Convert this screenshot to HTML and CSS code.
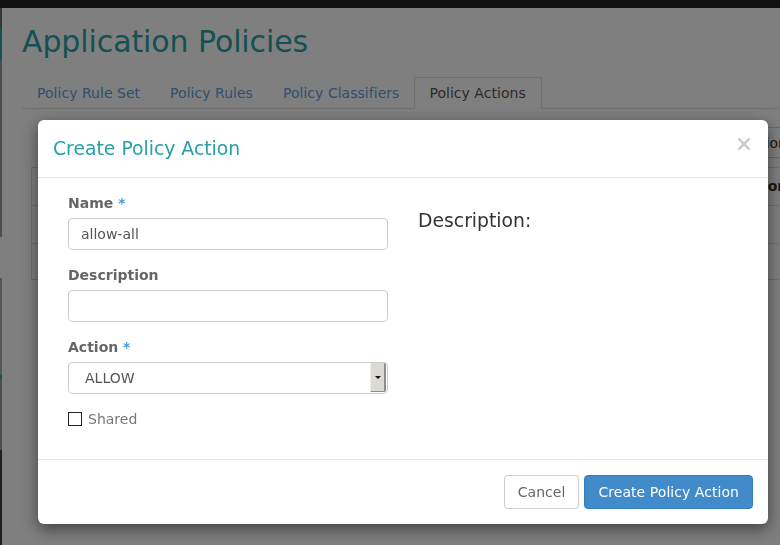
FILE: index.html
```html
<!DOCTYPE html>
<html>
<head>
<meta charset="utf-8">
<title>Application Policies</title>
<link rel="stylesheet" href="styles.css">
</head>
<body>
<div class="page">
  <div class="topbar"></div>
  <div class="main">
    <div class="edge">
      <span class="seg seg-a"></span>
      <span class="seg seg-b"></span>
      <span class="seg seg-c"></span>
      <span class="seg seg-d"></span>
      <span class="seg seg-e"></span>
      <span class="seg seg-b2"></span>
      <span class="seg seg-e2"></span>
      <span class="seg seg-f"></span>
    </div>
    <div class="content">
      <h1 class="page-title">Application Policies</h1>
      <ul class="tabs">
        <li class="tab">Policy Rule Set</li>
        <li class="tab">Policy Rules</li>
        <li class="tab">Policy Classifiers</li>
        <li class="tab active">Policy Actions</li>
      </ul>
      <div class="toolbar">
        <button class="tool-btn">Create Policy Action</button>
      </div>
      <div class="table">
        <div class="cell head"></div>
        <div class="cell head">Action</div>
        <div class="cell"></div>
        <div class="cell"></div>
        <div class="cell last"></div>
        <div class="cell last"></div>
      </div>
    </div>
  </div>
</div>

<div class="backdrop"></div>

<div class="modal">
  <div class="modal-header">
    <h3 class="modal-title">Create Policy Action</h3>
    <svg class="close" width="14" height="14" viewBox="0 0 14 14">
      <path d="M1.5 1.5 L12.5 12.5 M12.5 1.5 L1.5 12.5" stroke="#c6c6c6" stroke-width="2.2" fill="none"/>
    </svg>
  </div>
  <div class="modal-body">
    <div class="col">
      <div class="form-group">
        <label class="label">Name <span class="req">*</span></label>
        <div class="input">allow-all</div>
      </div>
      <div class="form-group">
        <label class="label">Description</label>
        <div class="input"></div>
      </div>
      <div class="form-group">
        <label class="label">Action <span class="req">*</span></label>
        <div class="select">
          <span class="select-text">ALLOW</span>
          <span class="select-arrow"><span class="tri"></span></span>
        </div>
      </div>
      <div class="form-group check-row">
        <span class="checkbox"></span>
        <span class="check-label">Shared</span>
      </div>
    </div>
    <div class="col">
      <h3 class="help-title">Description:</h3>
    </div>
  </div>
  <div class="modal-footer">
    <button class="btn btn-default">Cancel</button>
    <button class="btn btn-primary">Create Policy Action</button>
  </div>
</div>
</body>
</html>
```

FILE: styles.css
```css
html, body {
  margin: 0;
  padding: 0;
}
body {
  width: 780px;
  height: 545px;
  overflow: hidden;
  background: #fff;
  font-family: "DejaVu Sans", "Noto Sans", sans-serif;
  position: relative;
}

.page {
  height: 545px;
  display: flex;
  flex-direction: column;
}
.topbar {
  height: 8px;
  background: #222;
  flex: none;
}
.main {
  display: flex;
  flex: 1;
}
.edge {
  width: 2px;
  flex: none;
  display: flex;
  flex-direction: column;
}
.seg { display: block; flex: none; }
.seg-a { height: 20px; background: #707070; }
.seg-b { height: 32px; background: #2aa4a4; }
.seg-c { height: 177px; background: #999; }
.seg-d { height: 41px; background: #fff; }
.seg-e { height: 97px; background: #aaa; }
.seg-b2 { height: 4px; background: #2aa4a4; }
.seg-e2 { height: 71px; background: #9a9a9a; }
.seg-f { flex: 1; background: #463a50; }

.content {
  flex: none;
  width: 778px;
  padding-left: 20px;
}
.page-title {
  margin: 17px 0 0;
  font-size: 30px;
  line-height: 33px;
  font-weight: normal;
  letter-spacing: -0.1px;
  color: #2aa2a6;
}
.tabs {
  margin: 19px 0 0;
  padding: 0;
  list-style: none;
  display: flex;
  border-bottom: 1px solid #ddd;
}
.tab {
  font-size: 14px;
  line-height: 20px;
  padding: 5px 14px;
  border: 1px solid transparent;
  margin-bottom: -1px;
  letter-spacing: 0.03px;
  color: #5b9fe0;
}
.tab.active {
  color: #555;
  background: #fff;
  border-color: #ddd #ddd #fff;
  padding: 5px 15px 5px 14px;
}
.toolbar {
  margin-top: 18px;
  display: flex;
  justify-content: flex-end;
}
.tool-btn {
  height: 31px;
  box-sizing: border-box;
  border: 1px solid #ccc;
  border-radius: 4px;
  background: #fff;
  padding: 0 12px;
  font-family: inherit;
  font-size: 14px;
  color: #333;
  white-space: nowrap;
}
.table {
  margin: 9px 0 0 9px;
  border: 1px solid #ddd;
  border-right: none;
  display: grid;
  grid-template-columns: 697px 1fr;
}
.cell {
  height: 37px;
  border-bottom: 1px solid #ddd;
  padding: 0 8px;
  font-size: 14px;
  line-height: 37px;
  color: #333;
}
.cell.head {
  font-weight: bold;
}
.cell.last {
  height: 35px;
  border-bottom: none;
}

.backdrop {
  position: fixed;
  inset: 0;
  background: rgba(0, 0, 0, 0.5);
}

.modal {
  position: absolute;
  top: 120px;
  left: 38px;
  width: 730px;
  background: #fff;
  border-radius: 6px;
  box-shadow: 0 5px 15px rgba(0, 0, 0, 0.5);
}
.modal-header {
  padding: 15px;
  border-bottom: 1px solid #e5e5e5;
  display: flex;
  justify-content: space-between;
}
.modal-title {
  margin: 0;
  font-size: 18.8px;
  line-height: 27px;
  font-weight: normal;
  color: #27a0a8;
}
.close {
  margin-top: 2px;
  margin-right: 2px;
}
.modal-body {
  padding: 15px;
  display: grid;
  grid-template-columns: 350px 350px;
}
.col {
  padding: 0 15px;
}
.form-group {
  margin-bottom: 15px;
}
.label {
  display: block;
  font-size: 14px;
  line-height: 20px;
  font-weight: bold;
  color: #666;
  margin-bottom: 5px;
}
.req {
  color: #4a9ad8;
}
.input,
.select {
  height: 32px;
  box-sizing: border-box;
  border: 1px solid #ccc;
  border-radius: 4px;
  font-size: 14px;
  line-height: 30px;
  color: #555;
  padding: 0 12px;
}
.select {
  display: flex;
  padding: 0 1px 0 16px;
}
.select-text {
  flex: 1;
}
.select-arrow {
  width: 13px;
  margin: 0 0 1px;
  background: #dcdad5;
  border-left: 1px solid #eeece8;
  border-right: 2px solid #8c8c8c;
  border-bottom: 1px solid #8c8c8c;
  border-radius: 0 2px 2px 0;
  display: flex;
  align-items: center;
  justify-content: center;
}
.tri {
  width: 0;
  height: 0;
  border-left: 3px solid transparent;
  border-right: 3px solid transparent;
  border-top: 3px solid #111;
  margin-left: 1px;
}
.check-row {
  display: flex;
  align-items: center;
  gap: 6px;
  height: 20px;
}
.checkbox {
  width: 14px;
  height: 14px;
  box-sizing: border-box;
  border: 1.3px solid #222;
}
.check-label {
  font-size: 14px;
  color: #777;
}
.help-title {
  margin: 18px 0 0;
  font-size: 18.8px;
  line-height: 1.1;
  font-weight: normal;
  color: #333;
}
.modal-footer {
  border-top: 1px solid #e5e5e5;
  padding: 15px;
  display: flex;
  justify-content: flex-end;
  gap: 5px;
}
.btn {
  font-family: inherit;
  font-size: 14px;
  line-height: 20px;
  padding: 6px 13px;
  border: 1px solid transparent;
  border-radius: 4px;
  letter-spacing: 0.05px;
}
.btn-default {
  background: #fff;
  border-color: #ccc;
  color: #666;
}
.btn-primary {
  background: #428bca;
  border-color: #357ebd;
  color: #fff;
}
```
